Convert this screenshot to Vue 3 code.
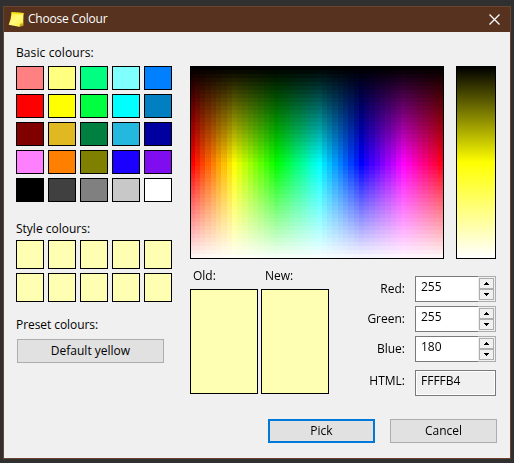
<script setup>
import { onMounted, ref } from 'vue'

const basic = [
  '#ff8080', '#ffff80', '#00ff80', '#80ffff', '#0080ff',
  '#ff0000', '#ffff00', '#00ff40', '#00ffff', '#0080c0',
  '#800000', '#dfb822', '#008040', '#24b8df', '#0000a0',
  '#ff80ff', '#ff8000', '#808000', '#1c00ff', '#800df0',
  '#000000', '#404040', '#808080', '#c8c8c8', '#ffffff',
]
const channels = [
  { name: 'Red', value: 255 },
  { name: 'Green', value: 255 },
  { name: 'Blue', value: 180 },
]
const picked = '#ffffb4'

const spectrum = ref(null)
const STEPS = 48

onMounted(() => {
  const { width, height } = spectrum.value
  const ctx = spectrum.value.getContext('2d')
  for (let i = 0; i < STEPS; i++) {
    const x0 = Math.floor((i * width) / STEPS)
    const x1 = Math.floor(((i + 1) * width) / STEPS)
    for (let j = 0; j < STEPS; j++) {
      const y0 = Math.floor((j * height) / STEPS)
      const y1 = Math.floor(((j + 1) * height) / STEPS)
      ctx.fillStyle = `hsl(${(i * 360) / STEPS}, 100%, ${(j * 100) / STEPS}%)`
      ctx.fillRect(x0, y0, x1 - x0, y1 - y0)
    }
  }
  ctx.strokeStyle = '#000'
  ctx.lineWidth = 1
  ctx.strokeRect(0.5, 0.5, width - 1, height - 1)
})
</script>

<template>
  <div class="desktop">
    <div class="window">
      <header class="titlebar">
        <svg class="note" width="16" height="17" viewBox="0 0 16 17">
          <defs>
            <linearGradient id="noteFill" x1="0" y1="0" x2="1" y2="1">
              <stop offset="0" stop-color="#ffee28" />
              <stop offset="0.5" stop-color="#fff980" />
              <stop offset="1" stop-color="#ffee30" />
            </linearGradient>
          </defs>
          <path d="M3.6 1.2 L15.5 2 L15.2 14.4 L11 15.8 L0.7 13.7 Q3.2 8 3.6 1.2 Z" fill="url(#noteFill)" />
          <path d="M3.6 1.2 L15.5 2 L15.5 3.8 L3.5 3 Z" fill="#f8e410" />
          <path d="M15.4 11.8 L15.2 14.6 L10.6 16 Q12.6 14.2 12 12.6 Q14 12.8 15.4 11.8 Z" fill="#c9a51c" />
        </svg>
        <h1 class="caption">Choose Colour</h1>
        <svg class="close" width="11" height="11" viewBox="0 0 11 11">
          <path d="M0.5 0.5 L10.5 10.5 M10.5 0.5 L0.5 10.5" stroke="#fff" stroke-width="1.25" fill="none" />
        </svg>
      </header>

      <main class="body">
        <section class="left">
          <div class="label basic-label">Basic colours:</div>
          <div class="swatches basic">
            <i v-for="c in basic" :key="c" :style="{ background: c }"></i>
          </div>
          <div class="label style-label">Style colours:</div>
          <div class="swatches styles">
            <i v-for="n in 10" :key="n" :style="{ background: picked }"></i>
          </div>
          <div class="label preset-label">Preset colours:</div>
          <button class="btn preset">Default yellow</button>
        </section>

        <section class="right">
          <div class="pickers">
            <canvas ref="spectrum" class="spectrum" width="254" height="193"></canvas>
            <div class="lightness"></div>
          </div>
          <div class="details">
            <div class="preview">
              <div><div class="label old">Old:</div><div class="sample"></div></div>
              <div><div class="label new">New:</div><div class="sample"></div></div>
            </div>
            <div class="fields">
              <div v-for="c in channels" :key="c.name" class="field">
                <span class="label">{{ c.name }}:</span>
                <div class="box spin">
                  <span class="value">{{ c.value }}</span>
                  <div class="arrows">
                    <b><svg width="5" height="3" viewBox="0 0 5 3"><path d="M2 0h1v1h1v1h1v1H0V2h1V1h1z" /></svg></b>
                    <b><svg width="5" height="3" viewBox="0 0 5 3"><path d="M0 0h5v1H4v1H3v1H2V2H1V1H0z" /></svg></b>
                  </div>
                </div>
              </div>
              <div class="field html">
                <span class="label">HTML:</span>
                <div class="box readonly"><span class="value">FFFFB4</span></div>
              </div>
            </div>
          </div>
        </section>
      </main>

      <footer class="actions">
        <button class="btn primary">Pick</button>
        <button class="btn">Cancel</button>
      </footer>
    </div>
  </div>
</template>

<style>
body { margin: 0; background: #303030; }
</style>

<style scoped>
* { box-sizing: border-box; }
.desktop {
  width: 514px;
  height: 463px;
  padding: 6px 3px 4px;
  background: #303030;
  font: 12px/16px "Open Sans", "Noto Sans", sans-serif;
  color: #000;
  overflow: hidden;
}
.window {
  width: 508px;
  height: 453px;
  border: 1px solid #6b442f;
  background: #f0f0f0;
  display: flex;
  flex-direction: column;
}
.titlebar {
  height: 25px;
  flex: none;
  display: flex;
  align-items: center;
  padding: 0 10px 0 4px;
  background: #57321e;
  color: #fff;
}
.caption {
  margin: 0 0 2px 4px;
  font-size: 12px;
  line-height: 16px;
  font-weight: 400;
  letter-spacing: -0.22px;
  flex: 1;
}
.body {
  display: flex;
  gap: 18px;
  padding: 13px 0 0 12px;
  height: 362px;
  flex: none;
}
.left { width: 156px; }
.label { white-space: nowrap; height: 16px; }
.basic-label { letter-spacing: 0.1px; }
.swatches { display: grid; grid-template-columns: repeat(5, 28px); gap: 4px; }
.swatches i { border: 1px solid #000; }
.basic { grid-auto-rows: 24px; margin-top: 5px; }
.style-label { margin-top: 19px; }
.styles { grid-auto-rows: 29px; margin-top: 3px; }
.preset-label { margin-top: 15px; letter-spacing: -0.07px; }
.btn {
  display: block;
  width: 107px;
  height: 24px;
  padding: 0;
  border: 1px solid #adadad;
  background: #e1e1e1;
  font: inherit;
  line-height: 22px;
  color: #000;
  text-align: center;
}
.preset { width: 147px; margin: 6px 0 0 1px; }
.right { padding-top: 21px; width: 306px; }
.pickers { display: flex; gap: 12px; }
.spectrum { display: block; }
.lightness {
  width: 40px;
  height: 193px;
  border: 1px solid #000;
  background: linear-gradient(#000, #ff0 50%, #fff);
}
.details { display: flex; justify-content: space-between; }
.preview { display: flex; gap: 3px; padding-top: 9px; }
.preview .label { padding-left: 3px; }
.preview .new { padding-left: 4px; }
.sample {
  width: 68px;
  height: 105px;
  margin-top: 5px;
  border: 1px solid #000;
  background: #ffffb4;
}
.fields { display: flex; flex-direction: column; gap: 4px; padding-top: 17px; }
.field { display: flex; justify-content: flex-end; align-items: flex-start; gap: 10px; height: 26px; }
.field .label { padding-top: 5px; height: 22px; }
.field.html { margin-top: 4px; }
.field.html .label { padding-top: 3px; }
.box {
  width: 81px;
  height: 26px;
  border: 1px solid #7a7a7a;
  background: #fff;
  display: flex;
  justify-content: space-between;
  padding-left: 5px;
}
.value { line-height: 20px; }
.readonly { background: #f0f0f0; box-shadow: inset 0 0 0 1px #fff; }
.arrows {
  width: 18px;
  height: 26px;
  margin: -1px -1px 0 0;
  padding: 1px;
  border: 1px solid #adadad;
  border-left: 0;
  background: #f0f0f0;
  display: flex;
  flex-direction: column;
}
.arrows b {
  flex: 1;
  border: 1px solid #adadad;
  display: flex;
  align-items: center;
  justify-content: center;
}
.actions {
  display: flex;
  justify-content: flex-end;
  gap: 15px;
  padding: 25px 13px 0 0;
}
.primary { border: 2px solid #0078d7; line-height: 20px; }
</style>
